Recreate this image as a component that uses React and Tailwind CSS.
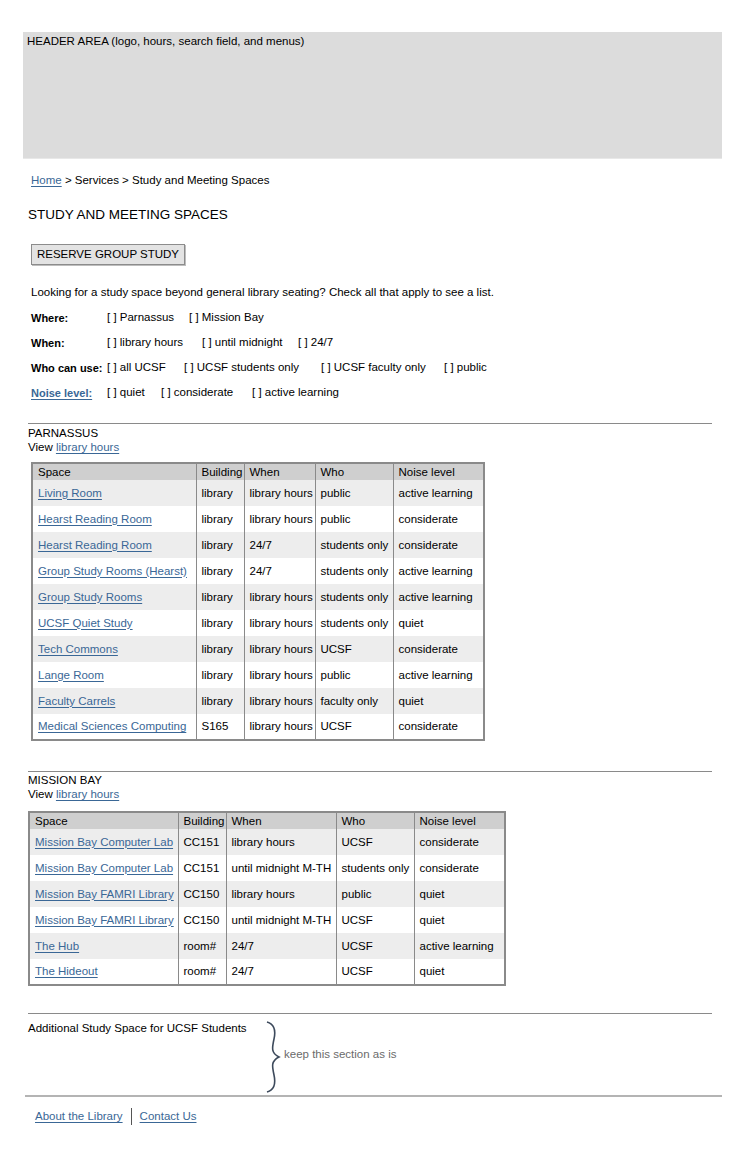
import React from "react";

const parnassus = [
  ["Living Room", "library", "library hours", "public", "active learning"],
  ["Hearst Reading Room", "library", "library hours", "public", "considerate"],
  ["Hearst Reading Room", "library", "24/7", "students only", "considerate"],
  ["Group Study Rooms (Hearst)", "library", "24/7", "students only", "active learning"],
  ["Group Study Rooms", "library", "library hours", "students only", "active learning"],
  ["UCSF Quiet Study", "library", "library hours", "students only", "quiet"],
  ["Tech Commons", "library", "library hours", "UCSF", "considerate"],
  ["Lange Room", "library", "library hours", "public", "active learning"],
  ["Faculty Carrels", "library", "library hours", "faculty only", "quiet"],
  ["Medical Sciences Computing", "S165", "library hours", "UCSF", "considerate"],
];

const missionBay = [
  ["Mission Bay Computer Lab", "CC151", "library hours", "UCSF", "considerate"],
  ["Mission Bay Computer Lab", "CC151", "until midnight M-TH", "students only", "considerate"],
  ["Mission Bay FAMRI Library", "CC150", "library hours", "public", "quiet"],
  ["Mission Bay FAMRI Library", "CC150", "until midnight M-TH", "UCSF", "quiet"],
  ["The Hub", "room#", "24/7", "UCSF", "active learning"],
  ["The Hideout", "room#", "24/7", "UCSF", "quiet"],
];

const linkCls = "text-[#3a6796] underline underline-offset-2 decoration-[#3a6796]";

function SpacesTable({ rows, widths, className }) {
  const heads = ["Space", "Building", "When", "Who", "Noise level"];
  return (
    <table className={"border-collapse border-2 border-[#8a8a8a] table-fixed " + className}>
      <colgroup>
        {widths.map((w, i) => (
          <col key={i} style={{ width: w }} />
        ))}
      </colgroup>
      <thead>
        <tr className="bg-[#cfcfcf] h-[17px]">
          {heads.map((h, i) => (
            <th
              key={h}
              className={
                "text-left font-normal px-[5px] py-0 leading-[16px] whitespace-nowrap " +
                (i > 0 ? "border-l border-[#8a8a8a]" : "")
              }
            >
              {h}
            </th>
          ))}
        </tr>
      </thead>
      <tbody>
        {rows.map((r, ri) => (
          <tr key={ri} className={"h-[26px] " + (ri % 2 === 0 ? "bg-[#ededed]" : "bg-white")}>
            {r.map((c, i) => (
              <td
                key={i}
                className={
                  "px-[5px] py-0 whitespace-nowrap " +
                  (i > 0 ? "border-l border-[#8a8a8a]" : "")
                }
              >
                {i === 0 ? <a className={linkCls}>{c}</a> : c}
              </td>
            ))}
          </tr>
        ))}
      </tbody>
    </table>
  );
}

// items: [text, width]
function FilterRow({ label, link, items }) {
  return (
    <div className="flex items-center h-[25px]">
      <div className={"w-[76px] font-bold shrink-0 text-[11px] " + (link ? linkCls : "")}>{label}</div>
      {items.map(([t, w]) => (
        <span key={t} className="whitespace-nowrap" style={{ width: w }}>
          [ ] {t}
        </span>
      ))}
    </div>
  );
}

export default function App() {
  return (
    <div
      className="bg-white text-black text-[11.5px] min-h-[1164px] w-[750px] pt-[32px]"
      style={{ fontFamily: '"Liberation Sans", Arial, sans-serif' }}
    >
      <div className="ml-[23px] w-[699px] h-[127px] bg-[#dcdcdc] border-b border-[#e8e8e8] px-[4px] py-[1px]">
        HEADER AREA (logo, hours, search field, and menus)
      </div>

      <div className="ml-[31px] mt-[13px]">
        <a className={linkCls}>Home</a> &gt; Services &gt; Study and Meeting Spaces
      </div>

      <h1 className="ml-[28px] mt-[17px] text-[13.5px] leading-[18px]">STUDY AND MEETING SPACES</h1>

      <button className="ml-[31px] mt-[20px] w-[154px] h-[21px] bg-[#e3e3e3] border border-[#8c8c8c] shadow-[1px_1px_0_#bdbdbd] text-[11.5px] leading-none">
        RESERVE GROUP STUDY
      </button>

      <div className="ml-[31px] mt-[15px]">
        <div className="h-[25px] flex items-center">
          Looking for a study space beyond general library seating? Check all that apply to see a list.
        </div>
        <FilterRow label="Where:" items={[["Parnassus", 82], ["Mission Bay", 100]]} />
        <FilterRow
          label="When:"
          items={[["library hours", 95], ["until midnight", 96], ["24/7", 60]]}
        />
        <FilterRow
          label="Who can use:"
          items={[["all UCSF", 77], ["UCSF students only", 137], ["UCSF faculty only", 123], ["public", 60]]}
        />
        <FilterRow
          label="Noise level:"
          link
          items={[["quiet", 54], ["considerate", 91], ["active learning", 120]]}
        />
      </div>

      <div className="ml-[28px] w-[684px] mt-[18px] border-t border-[#8a8a8a] pt-[2px]">
        <div className="leading-[14px]">PARNASSUS</div>
        <div className="leading-[14px]">
          View <a className={linkCls}>library hours</a>
        </div>
        <SpacesTable
          rows={parnassus}
          widths={["164px", "48px", "71px", "78px", "91px"]}
          className="ml-[3px] mt-[8px] w-[452px]"
        />
      </div>

      <div className="ml-[28px] w-[684px] mt-[30px] border-t border-[#8a8a8a] pt-[1px]">
        <div className="leading-[14px]">MISSION BAY</div>
        <div className="leading-[14px]">
          View <a className={linkCls}>library hours</a>
        </div>
        <SpacesTable
          rows={missionBay}
          widths={["149px", "48px", "110px", "78px", "91px"]}
          className="mt-[10px] w-[476px]"
        />
      </div>

      <div className="ml-[28px] w-[684px] mt-[27px] border-t border-[#8a8a8a] flex h-[82px]">
        <div className="w-[237px] pt-[6px]">Additional Study Space for UCSF Students</div>
        <div className="flex items-center">
          <svg width="18" height="72" viewBox="0 0 18 72" className="mt-[4px]">
            <path
              d="M2 1 C9 3 11 9 9 18 C7 27 6 32 14 36 C6 40 7 45 9 54 C11 63 9 69 2 71"
              fill="none"
              stroke="#3d4a5c"
              strokeWidth="1.6"
            />
          </svg>
          <span className="text-[#6b6b6b] ml-[1px]">keep this section as is</span>
        </div>
      </div>

      <div className="ml-[25px] w-[697px] border-t-[2px] border-[#b4b4b4]" />

      <div className="ml-[35px] mt-[11px] flex items-center">
        <a className={linkCls}>About the Library</a>
        <span className="mx-[8px] w-px h-[17px] bg-[#555]" />
        <a className={linkCls}>Contact Us</a>
      </div>
    </div>
  );
}
